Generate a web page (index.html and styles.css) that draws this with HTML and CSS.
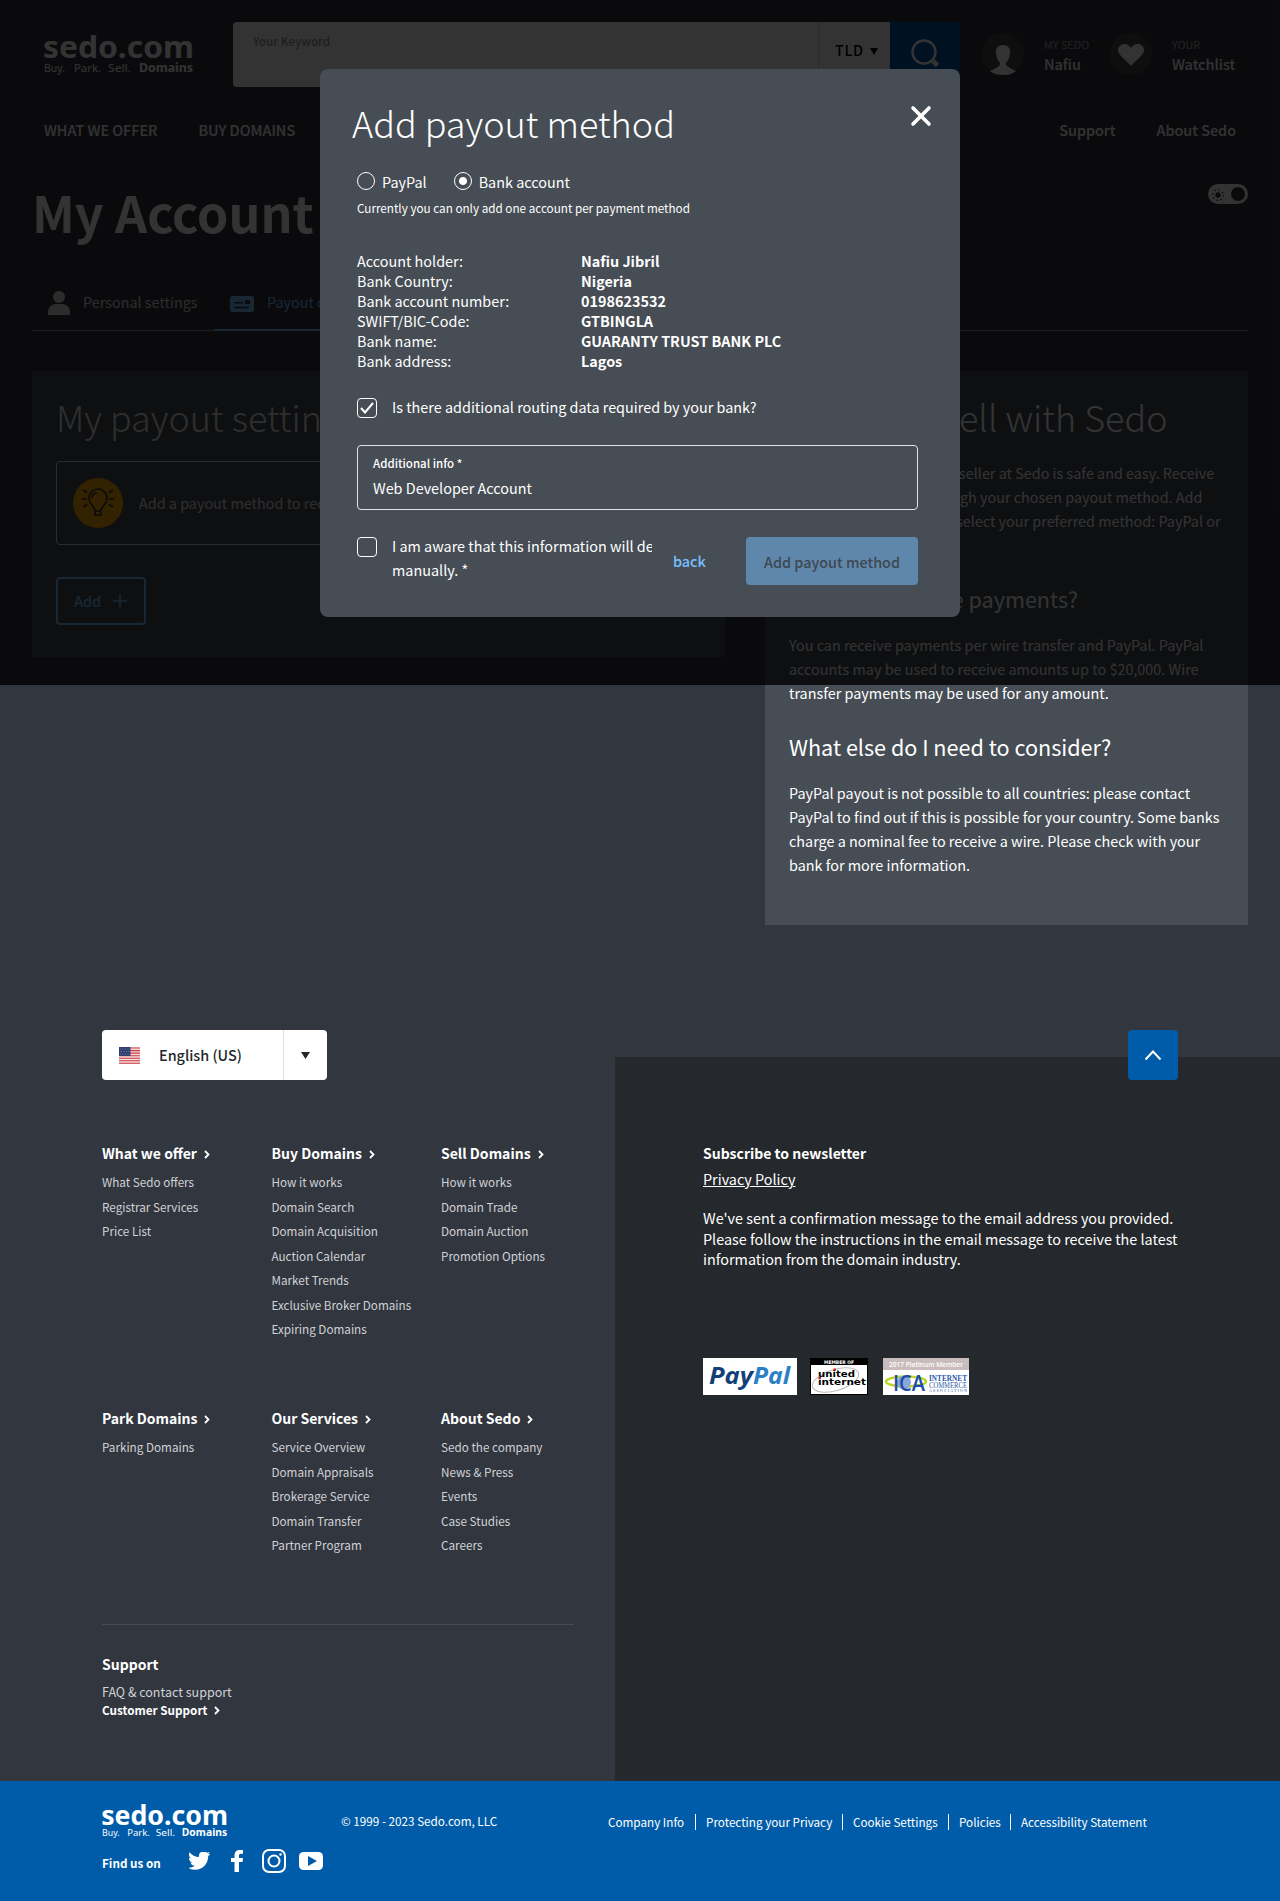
FILE: index.html
```html
<!DOCTYPE html>
<html lang="en">
<head>
<meta charset="utf-8">
<title>My Account - Sedo</title>
<link rel="stylesheet" href="styles.css">
</head>
<body>
<header class="top">
  <svg class="logo" viewBox="0 0 150 44"><text class="logo-name" x="-1" y="25" font-size="31" textLength="151" lengthAdjust="spacingAndGlyphs">sedo.com</text><g class="logo-tag" font-size="11.5"><text x="0" y="39" textLength="21" lengthAdjust="spacingAndGlyphs">Buy.</text><text x="30" y="39" textLength="27" lengthAdjust="spacingAndGlyphs">Park.</text><text x="64" y="39" textLength="23" lengthAdjust="spacingAndGlyphs">Sell.</text><text x="95" y="39" font-weight="700" textLength="54" lengthAdjust="spacingAndGlyphs">Domains</text></g></svg>
  <div class="search">
    <span class="keyword">Your Keyword</span>
    <span class="tld">TLD <svg width="8" height="7"><path d="M0 0h8L4 7z"/></svg></span>
    <span class="go"><svg width="30" height="30" viewBox="0 0 30 30" fill="none" stroke="#fff"><circle cx="14" cy="13" r="11.5" stroke-width="2.4"/><path d="M23 22l4.500 4.500" stroke-width="5"/></svg></span>
  </div>
  <div class="user">
    <svg width="42" height="42" viewBox="0 0 42 42"><circle cx="21" cy="21" r="21" fill="#464646"/><path fill="#fff" d="M21 12c-5 0-7.500 3-7 8 .3 5 2 8 4 10 .5 3-2 4-10 8 4 3 8 4 13 4s9-1 13-4c-8-4-10.500-5-10-8 2-2 3.700-5 4-10 .5-5-2-8-7-8z"/></svg>
    <p><small>MY SEDO</small>Nafiu</p>
  </div>
  <div class="user watch">
    <svg width="42" height="42" viewBox="0 0 42 42"><circle cx="21" cy="21" r="21" fill="#464646"/><path fill="#fff" d="M21 33C16 27 8 22 8 17c0-6 9-9 13-2 4-7 13-4 13 2 0 5-8 10-13 16z"/></svg>
    <p><small>YOUR</small>Watchlist</p>
  </div>
</header>
<nav class="nav"><a>WHAT WE OFFER</a><a>BUY DOMAINS</a><a class="right">Support</a><a>About Sedo</a></nav>
<main>
  <div class="title-row"><h1>My Account</h1>
    <svg class="toggle" width="40" height="20" viewBox="0 0 40 20"><rect width="40" height="20" rx="10" fill="#fff"/><circle cx="30" cy="10" r="7" fill="#32363f"/><circle cx="10" cy="11" r="2.700" fill="#32363f"/><circle cx="10" cy="11" r="5.200" fill="none" stroke="#32363f" stroke-width="1.500" stroke-dasharray="1.300 2.784"/></svg>
  </div>
  <div class="tabs">
    <a class="tab"><svg width="22" height="24" viewBox="0 0 22 24" fill="currentColor"><circle cx="11" cy="6" r="6"/><path d="M0 24v-3c0-5 4-8 8-8h6c4 0 8 3 8 8v3z"/></svg><span>Personal settings</span></a>
    <a class="tab active"><svg width="24" height="16" viewBox="0 0 24 16"><rect width="24" height="16" rx="2.500" fill="currentColor"/><path d="M4 6.700h9M4 11.500h15" stroke="#32363f" stroke-width="1.400"/><rect x="15" y="4" width="5" height="4" fill="#32363f"/></svg><span>Payout data</span></a>
  </div>
  <div class="cols">
    <section class="card settings">
      <h2>My payout settings</h2>
      <div class="hint">
        <svg width="50" height="50" viewBox="0 0 50 50" fill="none" stroke="#32363f" stroke-width="1.700"><circle cx="25" cy="25" r="25" fill="#ffa800" stroke="none"/><path d="M22 33c0-5-6-6-6-13a9 9 0 0 1 18 0c0 7-6 8-6 13zM22 34v3h6v-3M19 20c0-3 2-5 5-5M9 21h5M36 21h5M10 12l4 2.500M40 12l-4 2.500M10 29l4-2.500M40 29l-4-2.500"/></svg>
        <span>Add a payout method to receive payments</span>
      </div>
      <button class="add">Add <svg width="14" height="14" viewBox="0 0 14 14" stroke="currentColor" stroke-width="1.500"><path d="M7 0v14M0 7h14"/></svg></button>
    </section>
    <section class="card info">
      <h2><span class="lead l1">How to s</span>ell with Sedo</h2>
      <p><span class="lead l2">Getting paid as a </span>seller at Sedo is safe and easy. Receive<br><span class="lead l3">your money throu</span>gh your chosen payout method. Add<br><span class="lead l4">an account and </span>select your preferred method: PayPal or<br>bank account.</p>
      <h3>How can I receive payments?</h3>
      <p>You can receive payments per wire transfer and PayPal. PayPal<br>accounts may be used to receive amounts up to $20,000. Wire<br>transfer payments may be used for any amount.</p>
      <h3 class="second">What else do I need to consider?</h3>
      <p>PayPal payout is not possible to all countries: please contact<br>PayPal to find out if this is possible for your country. Some banks<br>charge a nominal fee to receive a wire. Please check with your<br>bank for more information.</p>
    </section>
  </div>
</main>
<footer>
  <div class="foot">
    <div class="links">
      <div class="lang"><svg width="21" height="17" viewBox="0 0 21 17"><path fill="#f1dede" d="M0 0h21v17H0z"/><path stroke="#cd3a3f" stroke-width="1.100" d="M0 1h21M0 3.600h21M0 6.100h21M0 8.700h21M0 11.200h21M0 13.700h21M0 16.200h21"/><path fill="#303f70" d="M0 0h11.500v9H0z"/><path stroke="#8791b3" stroke-width=".7" stroke-dasharray="1 1.500" d="M1 2h10M2 4.500h9M1 7h10"/></svg><b>English (US)</b><i><svg width="9" height="7"><path fill="#23272b" d="M0 0h9L4.500 7z"/></svg></i></div>
      <div class="grid">
        <ul><li>What we offer<svg class="chev" viewBox="0 0 6 9"><path d="M1 1l3.500 3.500L1 8"/></svg></li><li>What Sedo offers</li><li>Registrar Services</li><li>Price List</li></ul>
        <ul><li>Buy Domains<svg class="chev" viewBox="0 0 6 9"><path d="M1 1l3.500 3.500L1 8"/></svg></li><li>How it works</li><li>Domain Search</li><li>Domain Acquisition</li><li>Auction Calendar</li><li>Market Trends</li><li>Exclusive Broker Domains</li><li>Expiring Domains</li></ul>
        <ul><li>Sell Domains<svg class="chev" viewBox="0 0 6 9"><path d="M1 1l3.500 3.500L1 8"/></svg></li><li>How it works</li><li>Domain Trade</li><li>Domain Auction</li><li>Promotion Options</li></ul>
        <ul><li>Park Domains<svg class="chev" viewBox="0 0 6 9"><path d="M1 1l3.500 3.500L1 8"/></svg></li><li>Parking Domains</li></ul>
        <ul><li>Our Services<svg class="chev" viewBox="0 0 6 9"><path d="M1 1l3.500 3.500L1 8"/></svg></li><li>Service Overview</li><li>Domain Appraisals</li><li>Brokerage Service</li><li>Domain Transfer</li><li>Partner Program</li></ul>
        <ul><li>About Sedo<svg class="chev" viewBox="0 0 6 9"><path d="M1 1l3.500 3.500L1 8"/></svg></li><li>Sedo the company</li><li>News &amp; Press</li><li>Events</li><li>Case Studies</li><li>Careers</li></ul>
      </div>
      <div class="support"><h4>Support</h4><p>FAQ &amp; contact support</p><p class="strong">Customer Support<svg class="chev" viewBox="0 0 6 9"><path d="M1 1l3.500 3.500L1 8"/></svg></p></div>
    </div>
    <div class="news">
      <a class="up"><svg width="18" height="12" viewBox="0 0 18 12" fill="none" stroke="#fff" stroke-width="2"><path d="M1.500 10.500L9 2.500l7.500 8"/></svg></a>
      <h4>Subscribe to newsletter</h4>
      <a class="privacy">Privacy Policy</a>
      <p>We've sent a confirmation message to the email address you provided.<br>Please follow the instructions in the email message to receive the latest<br>information from the domain industry.</p>
      <div class="badges">
        <svg width="94" height="37" viewBox="0 0 94 37"><path fill="#fff" d="M0 0h94v37H0z"/><g font-family="Open Sans" font-weight="700" font-style="italic" font-size="23"><text x="6" y="26" fill="#123f78" textLength="44" lengthAdjust="spacingAndGlyphs">Pay</text><text x="50" y="26" fill="#2b7fc5" textLength="37" lengthAdjust="spacingAndGlyphs">Pal</text></g></svg>
        <svg width="58" height="37" viewBox="0 0 58 37"><path d="M0 0h58v37H0z"/><path fill="#fff" d="M1 7h56v29H1z"/><ellipse cx="25.500" cy="22" rx="24" ry="10.500" transform="rotate(-17 25.500 22)" fill="none" stroke="#bbb"/><g font-family="DejaVu Sans" font-weight="700"><text x="14" y="5.500" font-size="4.800" fill="#fff" textLength="30" lengthAdjust="spacingAndGlyphs">MEMBER OF</text><text x="8" y="18.500" font-size="9.500" textLength="37" lengthAdjust="spacingAndGlyphs">united</text><text x="8" y="27" font-size="9.500" textLength="48" lengthAdjust="spacingAndGlyphs">internet</text></g><path fill="#e01b22" d="M23.500 10.500H26v2h-2.500zM8.500 19H11v2H8.500z"/></svg>
        <svg width="86" height="37" viewBox="0 0 86 37"><path fill="#fff" d="M0 0h86v37H0z"/><path fill="#c8bdbc" d="M0 0h86v12H0z"/><text x="6" y="9" font-family="Open Sans" font-weight="600" font-size="7.500" fill="#fff" textLength="74" lengthAdjust="spacingAndGlyphs">2017 Platinum Member</text><ellipse cx="23" cy="23.500" rx="20" ry="5" fill="none" stroke="#bfd52a" stroke-width="2.500"/><circle cx="21" cy="24.500" r="7" fill="#8aa5d8"/><text x="10" y="32.500" font-family="Open Sans" font-weight="600" font-size="21" fill="#1d4ca8" textLength="32" lengthAdjust="spacingAndGlyphs">ICA</text><g font-family="Liberation Serif" fill="#2c58a5"><text x="46" y="23" font-size="8.500" font-weight="700" textLength="38" lengthAdjust="spacingAndGlyphs">INTERNET</text><text x="46" y="29.500" font-size="7.500" textLength="38" lengthAdjust="spacingAndGlyphs">COMMERCE</text><text x="46" y="33.500" font-size="4" textLength="38">ASSOCIATION</text></g></svg>
      </div>
    </div>
  </div>
  <div class="bar">
    <div class="brand">
      <svg class="flogo" viewBox="0 0 150 44"><text class="logo-name" x="-1" y="25" font-size="31" textLength="151" lengthAdjust="spacingAndGlyphs">sedo.com</text><g class="logo-tag" font-size="11.500"><text x="0" y="39" textLength="21" lengthAdjust="spacingAndGlyphs">Buy.</text><text x="30" y="39" textLength="27" lengthAdjust="spacingAndGlyphs">Park.</text><text x="64" y="39" textLength="23" lengthAdjust="spacingAndGlyphs">Sell.</text><text x="95" y="39" font-weight="700" textLength="54" lengthAdjust="spacingAndGlyphs">Domains</text></g></svg>
      <div class="social"><b>Find us on</b>
        <svg class="tw" width="21" height="18" viewBox="1 3 22.500 19" preserveAspectRatio="none" fill="#fff"><path d="M23.950 4.570a10 10 0 0 1-2.820.78 4.960 4.960 0 0 0 2.160-2.730c-.95.560-2 .96-3.130 1.190a4.920 4.920 0 0 0-8.380 4.480C7.690 8.100 4.070 6.130 1.640 3.160a4.820 4.820 0 0 0-.67 2.480c0 1.710.87 3.210 2.190 4.100a4.900 4.900 0 0 1-2.230-.62v.06a4.920 4.920 0 0 0 3.950 4.830 5 5 0 0 1-2.210.08 4.940 4.940 0 0 0 4.600 3.420A9.870 9.870 0 0 1 0 19.540a13.990 13.990 0 0 0 7.550 2.210c9.050 0 14-7.500 14-13.980 0-.21 0-.42-.02-.63A9.940 9.940 0 0 0 24 4.590z"/></svg>
        <svg class="fb" width="12" height="22" viewBox="0 0 12 22" fill="#fff"><path d="M3.500 22V12H0V8h3.500V5.500C3.500 2 5.500 0 9 0h3v3.700H10c-1.700 0-2 .8-2 2V8h4l-.5 4H8v10z"/></svg>
        <svg class="ig" width="24" height="24" viewBox="0 0 24 24" fill="none" stroke="#fff" stroke-width="2"><rect x="1" y="1" width="22" height="22" rx="6"/><circle cx="12" cy="12" r="5.500"/><circle cx="18.500" cy="5.500" r="1.200" fill="#fff" stroke="none"/></svg>
        <svg width="24" height="18" viewBox="0 0 24 18"><rect width="24" height="18" rx="4.500" fill="#fff"/><path fill="#005ca9" d="M9 4l9 5-9 5z"/></svg>
      </div>
    </div>
    <span class="copy">© 1999 - 2023 Sedo.com, LLC</span>
    <div class="legal"><a class="w1">Company Info</a><a class="w2">Protecting your Privacy</a><a class="w3">Cookie Settings</a><a class="w4">Policies</a><a>Accessibility Statement</a></div>
  </div>
</footer>
<div class="overlay">
  <div class="modal">
    <div class="mhead"><h2>Add payout method</h2><svg width="22" height="22" viewBox="0 0 22 22" stroke="#fff" stroke-width="3.600" stroke-linecap="round"><path d="M3 3l16 16M19 3L3 19"/></svg></div>
    <div class="radios"><i class="radio"></i><span>PayPal</span><i class="radio on"></i><span>Bank account</span></div>
    <p class="note">Currently you can only add one account per payment method</p>
    <dl><dt>Account holder:</dt><dd>Nafiu Jibril</dd><dt>Bank Country:</dt><dd>Nigeria</dd><dt>Bank account number:</dt><dd>0198623532</dd><dt>SWIFT/BIC-Code:</dt><dd>GTBINGLA</dd><dt>Bank name:</dt><dd>GUARANTY TRUST BANK PLC</dd><dt>Bank address:</dt><dd>Lagos</dd></dl>
    <div class="check"><i class="box"><svg width="14" height="12" viewBox="0 0 14 12" fill="none" stroke="#fff" stroke-width="2"><path d="M1 6l4 4.500L13 1"/></svg></i><span>Is there additional routing data required by your bank?</span></div>
    <div class="field"><small>Additional info *</small><span>Web Developer Account</span></div>
    <div class="actions">
      <div class="check aware"><i class="box"></i><span>I am aware that this information will delay<br>manually. *</span></div>
      <a class="back">back</a><button class="submit">Add payout method</button>
    </div>
  </div>
</div>
</body>
</html>
```
FILE: styles.css
```css
* { box-sizing: border-box; }
body { margin: 0; position: relative; width: 1280px; height: 1901px; overflow: hidden; display: flex; flex-direction: column; background: #32363f; color: #fff; font: 14.4px/24px "Noto Sans CJK SC", "Noto Sans", sans-serif; }
h1, h2, h3, h4, p, ul, dl, dd { margin: 0; padding: 0; font-weight: 400; }
svg { display: block; flex: none; }
b { font-weight: 500; }
button { font: inherit; }
.logo-name { font-family: "Noto Sans"; font-weight: 700; fill: #fff; }
.logo-tag { font-family: "Noto Sans"; fill: #fff; }

.top { display: flex; align-items: flex-start; height: 110px; padding: 22px 44px 0; }
.logo { width: 150px; height: 44px; margin-top: 11px; overflow: visible; }
.search { display: flex; width: 727px; height: 65px; margin-left: 39px; background: #fff; border-radius: 4px; overflow: hidden; color: #25282c; }
.keyword { flex: 1; padding: 7px 20px; color: #999; font-size: 11.700px; font-weight: 500; }
.tld { display: flex; align-items: center; gap: 6px; width: 72px; height: 65px; padding: 0 0 9px 16px; border-left: 1px solid #ddd; color: #000; font-weight: 500; letter-spacing: .6px; }
.tld svg { margin-top: 3px; }
.go { width: 70px; padding: 17px 20px; background: #005ca9; }
.user { display: flex; gap: 20px; margin: 11px 0 0 22px; width: 106px; white-space: nowrap; }
.user p { line-height: 20px; margin-top: 1px; font-weight: 500; }
.user small { display: block; color: #aaa; font-size: 10.800px; font-weight: 400; }
.watch { width: 126px; }
.nav { display: flex; height: 42px; padding: 8px 44px; font-weight: 500; }
.nav a + a { margin-left: 41px; }
.nav .right { margin-left: auto !important; }
main { height: 874px; padding: 0 32px; }
.title-row { display: flex; justify-content: space-between; height: 128px; padding-top: 32px; }
h1 { margin: -3px 0 0; font-size: 50.200px; line-height: 60px; font-weight: 700; }
.tabs { display: flex; height: 51px; border-bottom: 1px solid #8a8d92; color: #ddd; }
.tab { display: flex; height: 51px; padding: 11px 16px; color: #ddd; }
.tab:first-child { width: 182px; }
.tab span { margin: -1px 0 0 13px; }
.active { width: 170px; border-bottom: 2px solid #77c0ff; color: #77c0ff; }
.active svg { margin-top: 5px; }
.cols { display: flex; justify-content: space-between; align-items: flex-start; margin-top: 40px; }
.card { background: #464d54; padding: 21px 24px; color: #fff; }
.card h2, .mhead h2 { font-size: 36px; line-height: 48px; font-weight: 300; white-space: nowrap; }
.settings { width: 693px; height: 286px; }
.settings h2, .settings .hint, .info { color: #e5e5e5; }
.hint { display: flex; align-items: center; gap: 16px; height: 84px; margin-top: 21px; padding: 0 16px; border: 1px solid #ddd; border-radius: 4px; color: #ddd; }
.add { display: flex; align-items: center; gap: 12px; width: 90px; height: 48px; margin-top: 32px; padding: 0 16px; border: 2px solid #77c0ff; border-radius: 4px; background: none; color: #77c0ff; font-weight: 500; }
.info { width: 483px; height: 554px; color: #fff; white-space: nowrap; }
.info h2 { margin-bottom: 21px; }
.info h3 { margin: 26px 0 18px; font-size: 21.600px; line-height: 32px; }
.info h3.second { margin: 26px 0 18px; }
.lead { display: inline-block; height: 24px; overflow: hidden; vertical-align: top; }
.l1 { width: 170px; height: 48px; } .l2 { width: 170px; } .l3 { width: 171px; } .l4 { width: 167px; }

footer { display: flex; flex-direction: column; }
.foot { display: flex; height: 755px; }
.links { width: 615px; padding: 4px 41px 0 102px; }
.lang { display: flex; align-items: center; width: 225px; height: 50px; padding-left: 17px; background: #fff; color: #23272b; border-radius: 4px; font-weight: 500; }
.lang b { flex: 1; margin-left: 19px; }
.lang i { display: flex; align-items: center; justify-content: center; width: 44px; height: 50px; border-left: 1px solid #ddd; }
.grid { display: grid; grid-template-columns: repeat(3, 169.500px); grid-template-rows: 265px 218px; margin-top: 61px; }
ul { list-style: none; font-size: 11.700px; line-height: 24.500px; color: #d0d2d5; }
ul li:first-child, h4 { margin-bottom: 5px; font-size: 14px; line-height: 24px; font-weight: 700; color: #fff; }
.chev { display: inline-block; width: 6px; height: 9px; margin-left: 7px; fill: none; stroke: #fff; stroke-width: 1.800; }
.support { border-top: 1px solid #484c50; padding-top: 27px; font-size: 12.500px; line-height: 18px; color: #d0d2d5; }
.support p { line-height: 18px; }
.support h4 { margin-bottom: 7px; }
.support .strong { font-size: 11.700px; font-weight: 700; color: #fff; }
.news { flex: 1; height: 724px; margin-top: 31px; padding-left: 88px; background: #25282c; }
.up { display: flex; align-items: center; justify-content: center; width: 50px; height: 50px; margin: -27px 0 61px 425px; border-radius: 4px; background: #005ca9; }
.privacy { display: block; line-height: 20px; text-decoration: underline; }
.news h4 { margin-bottom: 4px; }
.news p { margin-top: 19px; line-height: 20.500px; white-space: nowrap; }
.badges { display: flex; margin-top: 88px; }
.badges svg + svg { margin-left: 13px; } .badges svg:last-child { margin-left: 15px; }
.bar { display: flex; height: 120px; padding-left: 102px; background: #005ca9; font-size: 11.700px; }
.brand { width: 239px; padding-top: 22px; }
.flogo { width: 126px; height: 38px; overflow: visible; }
.social { display: flex; align-items: center; height: 24px; margin-top: 8px; }
.social b { width: 87px; font-weight: 700; padding-top: 4px; }
.fb { margin-left: 21px; } .ig { margin: 0 13px 0 19px; }
.copy { width: 267px; padding-top: 28px; }
.legal { display: flex; align-items: flex-start; padding-top: 33px; line-height: 16px; white-space: nowrap; }
.legal a + a { padding-left: 10px; border-left: 1px solid #fff; }
.w1 { width: 87px; } .w2 { width: 147px; } .w3 { width: 106px; } .w4 { width: 62px; }

/* dimmed backdrop covers the first viewport only */
.overlay { position: absolute; left: 0; top: 0; width: 1280px; height: 685px; padding-top: 69px; background: rgba(0, 0, 0, .8); }
.modal { width: 640px; height: 548px; margin: 0 auto; padding: 29px 42px 0 37px; border-radius: 8px; background: #464d54; }
.mhead { display: flex; justify-content: space-between; margin: 0 -14px 0 -5px; }
.mhead svg { margin: 7px 0 0; }
.radios { display: flex; align-items: center; height: 24px; margin-top: 24px; }
.radio { width: 18px; height: 18px; margin: -2px 7px 0 0; border: 1px solid #fff; border-radius: 50%; }
.radio.on { margin-left: 27px; background: radial-gradient(circle, #fff 3.500px, transparent 4.500px); }
.note { margin-top: 2px; font-size: 11.700px; }
dl { display: grid; grid-template-columns: 224px 1fr; margin-top: 31px; line-height: 20px; }
dd { font-weight: 700; }
.check { display: flex; gap: 15px; white-space: nowrap; }
dl + .check { margin-top: 24px; }
.box { display: flex; align-items: center; justify-content: center; flex: none; width: 20px; height: 20px; margin-top: 3px; border: 1px solid #fff; border-radius: 4px; }
.field { display: flex; flex-direction: column; height: 65px; margin-top: 26px; padding: 5px 15px; border: 1px solid #e0e2e6; border-radius: 4px; }
.field small { font-size: 11.500px; font-weight: 500; line-height: 25px; }
.actions { display: flex; align-items: flex-start; height: 48px; margin-top: 27px; }
.aware { width: 295px; overflow: hidden; margin-top: -3px; }
.back { flex: 1; padding: 12px 0 0 21px; color: #77c0ff; font-weight: 500; }
.submit { width: 172px; height: 48px; padding: 2px 0 0; border: 0; border-radius: 4px; background: #5f87ab; color: #3d4752; font-weight: 500; }
```
